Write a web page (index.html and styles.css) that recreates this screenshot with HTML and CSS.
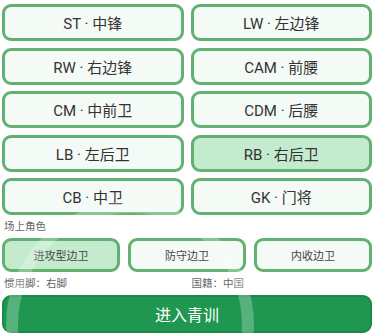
FILE: index.html
```html
<!DOCTYPE html>
<html>
  <head>
    <title>选择位置</title>
    <link rel="stylesheet" href="styles.css">
  </head>
  <body>
    <div class="page">
      <div class="pos-grid">
        <button class="pos">ST · 中锋</button>
        <button class="pos">LW · 左边锋</button>
        <button class="pos">RW · 右边锋</button>
        <button class="pos">CAM · 前腰</button>
        <button class="pos">CM · 中前卫</button>
        <button class="pos">CDM · 后腰</button>
        <button class="pos">LB · 左后卫</button>
        <button class="pos pos-on">RB · 右后卫</button>
        <button class="pos">CB · 中卫</button>
        <button class="pos">GK · 门将</button>
      </div>

      <p class="label">场上角色</p>
      <div class="role-row">
        <button class="role role-on">进攻型边卫</button>
        <button class="role">防守边卫</button>
        <button class="role">内收边卫</button>
      </div>

      <div class="info-row">
        <span>惯用脚：右脚</span>
        <span>国籍：中国</span>
      </div>

      <button class="button-enter">进入青训</button>

      <svg class="mark" width="300" height="300" viewBox="0 0 300 300">
        <circle cx="150" cy="150" r="118" fill="none" stroke="white" stroke-width="12" />
      </svg>
    </div>
  </body>
</html>
```

FILE: styles.css
```css
body {
  margin: 0;
  background-color: white;
  font-family: Roboto, "Noto Sans CJK SC", sans-serif;
  color: #333;
}
.page {
  position: relative;
  box-sizing: border-box;
  height: 335px;
  overflow: hidden;
  padding: 4px 3px 0 2px;
}
.pos-grid {
  display: grid;
  grid-template-columns: 1fr 1fr;
  column-gap: 7px;
  row-gap: 6.5px;
}
.pos {
  height: 37px;
  border: 3px solid #62b072;
  border-radius: 9px;
  background-color: #f4faf6;
  font-family: Roboto, "Noto Sans CJK SC", sans-serif;
  font-size: 15px;
  color: #333;
  padding: 0;
}
.pos-on {
  background-color: #c4ebcd;
}
.label {
  margin: 5px 0 0 2px;
  font-size: 10.5px;
  line-height: 14px;
  color: #666;
}
.role-row {
  display: grid;
  grid-template-columns: 1fr 1fr 1fr;
  column-gap: 8px;
  margin-top: 4px;
}
.role {
  height: 34px;
  border: 3px solid #62b072;
  border-radius: 9px;
  background-color: #f4faf6;
  font-family: Roboto, "Noto Sans CJK SC", sans-serif;
  font-size: 11px;
  color: #444;
  padding: 0;
}
.role-on {
  background-color: #c4ebcd;
}
.info-row {
  display: grid;
  grid-template-columns: 1fr 1fr;
  column-gap: 7px;
  margin: 5px 0 0 2px;
  font-size: 10.5px;
  line-height: 14px;
  color: #666;
}
.button-enter {
  display: block;
  width: 100%;
  height: 38px;
  margin-top: 4px;
  border: 2px solid #1b8a47;
  border-radius: 9px;
  background-color: #1f9751;
  color: white;
  font-family: Roboto, "Noto Sans CJK SC", sans-serif;
  font-size: 16px;
  padding: 0;
}
.mark {
  position: absolute;
  left: -20px;
  top: 175px;
  opacity: 0.25;
  pointer-events: none;
}
```
